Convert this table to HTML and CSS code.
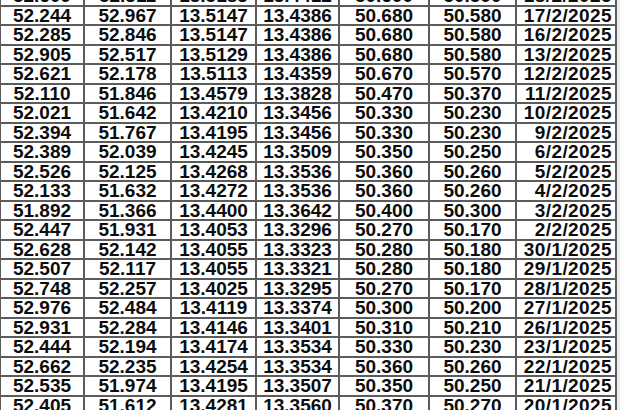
FILE: index.html
```html
<!DOCTYPE html>
<html>
<head>
<meta charset="utf-8">
<link rel="stylesheet" href="styles.css">
</head>
<body>
<div class="sheet">
<table class="rates">
<colgroup>
<col class="c1"><col class="c2"><col class="c3"><col class="c4"><col class="c5"><col class="c6"><col class="c7">
</colgroup>
<tbody>
<tr><td>52.609</td><td>52.311</td><td>13.5183</td><td>13.4412</td><td>50.690</td><td>50.590</td><td class="date">18/2/2025</td></tr>
<tr><td>52.244</td><td>52.967</td><td>13.5147</td><td>13.4386</td><td>50.680</td><td>50.580</td><td class="date">17/2/2025</td></tr>
<tr><td>52.285</td><td>52.846</td><td>13.5147</td><td>13.4386</td><td>50.680</td><td>50.580</td><td class="date">16/2/2025</td></tr>
<tr><td>52.905</td><td>52.517</td><td>13.5129</td><td>13.4386</td><td>50.680</td><td>50.580</td><td class="date">13/2/2025</td></tr>
<tr><td>52.621</td><td>52.178</td><td>13.5113</td><td>13.4359</td><td>50.670</td><td>50.570</td><td class="date">12/2/2025</td></tr>
<tr><td>52.110</td><td>51.846</td><td>13.4579</td><td>13.3828</td><td>50.470</td><td>50.370</td><td class="date">11/2/2025</td></tr>
<tr><td>52.021</td><td>51.642</td><td>13.4210</td><td>13.3456</td><td>50.330</td><td>50.230</td><td class="date">10/2/2025</td></tr>
<tr><td>52.394</td><td>51.767</td><td>13.4195</td><td>13.3456</td><td>50.330</td><td>50.230</td><td class="date">9/2/2025</td></tr>
<tr><td>52.389</td><td>52.039</td><td>13.4245</td><td>13.3509</td><td>50.350</td><td>50.250</td><td class="date">6/2/2025</td></tr>
<tr><td>52.526</td><td>52.125</td><td>13.4268</td><td>13.3536</td><td>50.360</td><td>50.260</td><td class="date">5/2/2025</td></tr>
<tr><td>52.133</td><td>51.632</td><td>13.4272</td><td>13.3536</td><td>50.360</td><td>50.260</td><td class="date">4/2/2025</td></tr>
<tr><td>51.892</td><td>51.366</td><td>13.4400</td><td>13.3642</td><td>50.400</td><td>50.300</td><td class="date">3/2/2025</td></tr>
<tr><td>52.447</td><td>51.931</td><td>13.4053</td><td>13.3296</td><td>50.270</td><td>50.170</td><td class="date">2/2/2025</td></tr>
<tr><td>52.628</td><td>52.142</td><td>13.4055</td><td>13.3323</td><td>50.280</td><td>50.180</td><td class="date">30/1/2025</td></tr>
<tr><td>52.507</td><td>52.117</td><td>13.4055</td><td>13.3321</td><td>50.280</td><td>50.180</td><td class="date">29/1/2025</td></tr>
<tr><td>52.748</td><td>52.257</td><td>13.4025</td><td>13.3295</td><td>50.270</td><td>50.170</td><td class="date">28/1/2025</td></tr>
<tr><td>52.976</td><td>52.484</td><td>13.4119</td><td>13.3374</td><td>50.300</td><td>50.200</td><td class="date">27/1/2025</td></tr>
<tr><td>52.931</td><td>52.284</td><td>13.4146</td><td>13.3401</td><td>50.310</td><td>50.210</td><td class="date">26/1/2025</td></tr>
<tr><td>52.444</td><td>52.194</td><td>13.4174</td><td>13.3534</td><td>50.330</td><td>50.230</td><td class="date">23/1/2025</td></tr>
<tr><td>52.662</td><td>52.235</td><td>13.4254</td><td>13.3534</td><td>50.360</td><td>50.260</td><td class="date">22/1/2025</td></tr>
<tr><td>52.535</td><td>51.974</td><td>13.4195</td><td>13.3507</td><td>50.350</td><td>50.250</td><td class="date">21/1/2025</td></tr>
<tr><td>52.405</td><td>51.612</td><td>13.4281</td><td>13.3560</td><td>50.370</td><td>50.270</td><td class="date">20/1/2025</td></tr>
</tbody>
</table>
</div>
</body>
</html>
```

FILE: styles.css
```css
html, body {
  margin: 0;
  padding: 0;
  background: #ececec;
}
.sheet {
  width: 620px;
  height: 410px;
  overflow: hidden;
}
.rates {
  border-collapse: collapse;
  table-layout: fixed;
  width: 616px;
  margin-top: -15px;
  margin-left: -1px;
  background: #ffffff;
  font-family: "Liberation Sans", Arial, sans-serif;
  font-weight: bold;
  font-size: 19px;
  color: #0d0d0d;
}
.c1 { width: 84px; }
.c2 { width: 87px; }
.c3 { width: 85px; }
.c4 { width: 83px; }
.c5 { width: 90px; }
.c6 { width: 87px; }
.c7 { width: 100px; }
.rates td {
  border: 2px solid #5c5c5c;
  height: 17.5px;
  padding: 0;
  line-height: 17px;
  text-align: center;
  white-space: nowrap;
  overflow: hidden;
}
.rates td.date {
  text-align: right;
  padding-right: 3px;
  letter-spacing: 0.4px;
}
```
